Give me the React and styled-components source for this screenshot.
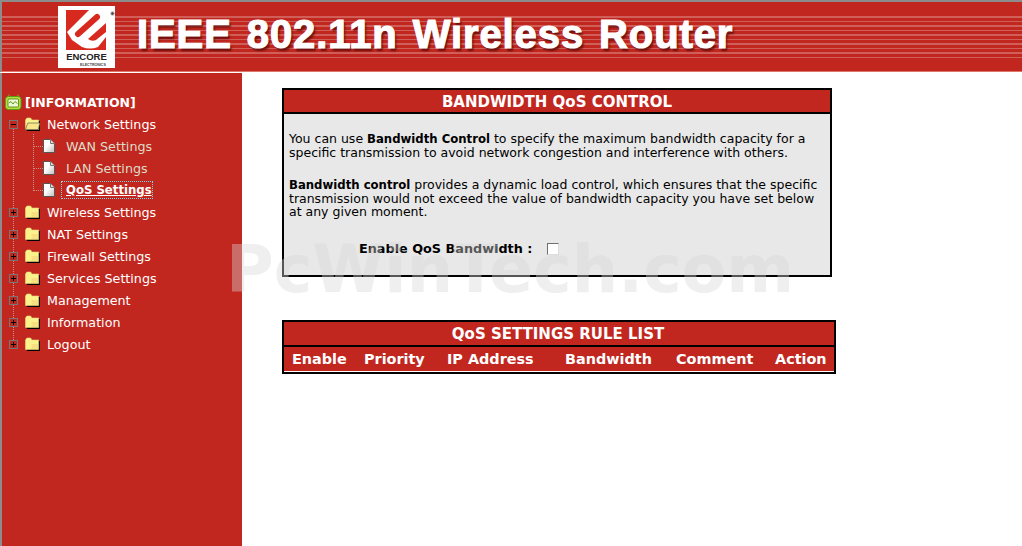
import React from 'react'
import styled, { createGlobalStyle } from 'styled-components'

const GlobalStyle = createGlobalStyle`
html, body { margin: 0; padding: 0; background: #fff; overflow: hidden; }
body { font-family: "DejaVu Sans", Verdana, sans-serif; }
`

const Page = styled.div`
position: relative;
width: 1022px;
height: 546px;
overflow: hidden;
background: #fff;
display: flex;
flex-direction: column;
border-top: 2px solid #8c8c8c;
box-sizing: border-box;
`

const Header = styled.header`
height: 70px;
flex: none;
display: flex;
align-items: flex-start;
padding-left: 58px;
border-left: 2px solid #8c8c8c;
border-bottom: 1px solid #e0756c;
box-sizing: border-box;
background:
  repeating-linear-gradient(180deg, rgba(255,255,255,.26) 0 1.5px, transparent 1.5px 4.55px) 0 14px / 100% 43px no-repeat,
  #c1271f;
`

const Logo = styled.div`
position: relative;
width: 57px;
height: 62px;
margin: 4px 0 0 -2px;
background: #fff;
flex: none;
`

const Registered = styled.span`
position: absolute;
left: 52px;
top: 5px;
width: 5px;
height: 5px;
box-sizing: border-box;
border-radius: 50%;
background: #555;
border: 1px solid #ddd;
`

const Title = styled.h1`
margin: 9px 0 0 22px;
font-family: "Liberation Sans", Arial, sans-serif;
font-weight: 700;
font-size: 40px;
line-height: 46px;
white-space: nowrap;
color: #fff;
-webkit-text-stroke: 1.2px #fff;
letter-spacing: .9px;
word-spacing: 3px;
text-shadow: 2px 3px 2px rgba(90,10,10,.8);
`

const Body = styled.div`
flex: 1;
display: flex;
margin-top: 1px;
min-height: 0;
`

const Sidebar = styled.nav`
width: 242px;
flex: none;
box-sizing: border-box;
border-left: 2px solid #8c8c8c;
background: #c1271f;
padding-top: 18px;
`

const TreeRoot = styled.div`
display: flex;
align-items: center;
height: 22px;
padding-left: 3px;
gap: 3px;
font-size: 12.5px;
font-weight: 700;
color: #fff;
`

const Row = styled.div`
position: relative;
display: flex;
align-items: center;
height: 22px;
padding-left: ${p => (p.$child ? 41 : 7)}px;
color: ${p => (p.$child ? '#dcdcc8' : '#fff')};
font-size: 12.7px;
white-space: nowrap;
`

const Expander = styled.span`
box-sizing: border-box;
width: 9px;
height: 9px;
border: 1px solid #777;
background: #c1271f;
margin-right: 7px;
flex: none;
position: relative;
&::before, &::after {
  content: '';
  position: absolute;
  background: #000;
}
&::before { left: 1px; right: 1px; top: 3px; height: 1px; }
&::after { display: ${p => (p.$open ? 'none' : 'block')}; top: 1px; bottom: 1px; left: 3px; width: 1px; }
`

const Label = styled.span`
margin-left: ${p => p.$gap}px;
padding: 0 1px;
${p => p.$active && `
  font-weight: 700;
  font-size: 11.7px;
  line-height: 15px;
  color: #fff;
  text-decoration: underline;
  outline: 1px dotted #7fd6e6;
  padding: 1px 0 0 4px;
`}
`

const Dots = styled.span`
position: absolute;
border-color: #c9908c;
border-style: dotted;
border-width: 0;
pointer-events: none;
`

const VLine = styled(Dots)`
left: 11px;
top: ${p => p.$top}px;
height: ${p => p.$height}px;
border-left-width: 1px;
`

const HookLine = styled(Dots)`
left: 31px;
bottom: 10px;
height: ${p => p.$height}px;
width: 9px;
border-left-width: 1px;
border-bottom-width: 1px;
`

const Main = styled.main`
flex: 1;
padding: 15px 0 0 40px;
display: flex;
flex-direction: column;
align-items: flex-start;
`

const Panel = styled.section`
box-sizing: border-box;
width: 550px;
height: 189px;
border: 2px solid #000;
background: #e8e8e8;
`

const PanelTitle = styled.div`
height: 22px;
line-height: 25px;
background: #c1271f;
border-bottom: 2px solid #000;
color: #fff;
font-size: 15px;
font-weight: 700;
text-align: center;
overflow: hidden;
`

const Para = styled.p`
margin: 0;
padding: ${p => p.$top}px 5px 0;
font-size: 12.5px;
line-height: 13px;
color: #000;
white-space: nowrap;
b { font-size: 11.7px; }
`

const EnableRow = styled.div`
display: flex;
align-items: center;
padding: 23px 0 0 75px;
font-size: 12.8px;
font-weight: 700;
color: #000;
`

const Check = styled.span`
box-sizing: border-box;
width: 12px;
height: 12px;
margin-left: 15px;
background: #fff;
border: 1px solid #707070;
border-right-color: #ddd;
border-bottom-color: #ddd;
`

const RuleTable = styled.section`
box-sizing: border-box;
width: 554px;
margin-top: 43px;
border: 2px solid #000;
`

const RuleTitle = styled.div`
height: 23px;
line-height: 24px;
background: #c1271f;
border-bottom: 2px solid #000;
color: #fff;
font-size: 15px;
font-weight: 700;
text-align: center;
padding-right: 2px;
`

const RuleHead = styled.div`
height: 24px;
display: flex;
align-items: center;
background: #c1271f;
color: #fff;
font-size: 14.4px;
font-weight: 700;
border-bottom: 1px solid #fff;
`

const Col = styled.span`
width: ${p => p.$w}px;
flex: none;
padding-left: ${p => p.$pad}px;
box-sizing: border-box;
white-space: nowrap;
`

const Watermark = styled.div`
position: absolute;
left: 226px;
top: 229px;
font-size: 65.2px;
line-height: 76px;
font-weight: 700;
color: rgba(215,215,215,.4);
white-space: nowrap;
pointer-events: none;
`

const FolderIcon = ({ open }) => (
  <svg width="15" height="14" viewBox="0 0 16 14" preserveAspectRatio="none" style={{ flex: 'none' }}>
    <path d="M2 3V14H16V4H9L7 2H3Z" fill="#000" />
    <path d="M.5 3 L2 1 H6 L7.5 3 H14.5 V12.5 H.5Z" fill="#fbf28c" stroke="#e9d87a" strokeWidth=".6" />
    <rect x="7" y="7" width="7" height="5" fill="#f6d97a" opacity=".7" />
    {open && <path d="M.5 12.5 L3 6 H16 L14 12.5Z" fill="#f8e58a" stroke="#444" strokeWidth=".6" />}
  </svg>
)

const PageIcon = () => (
  <svg width="12" height="14" viewBox="0 0 12 14" style={{ flex: 'none' }}>
    <defs>
      <linearGradient id="pg" x1="0" y1="0" x2="1" y2="1">
        <stop offset=".4" stopColor="#fff" />
        <stop offset="1" stopColor="#bdbdbd" />
      </linearGradient>
    </defs>
    <path d="M.5.5H7.5L11.5 4.5V13.5H.5Z" fill="url(#pg)" stroke="#555" />
    <path d="M7.5.5V4.5H11.5" fill="#ddd" stroke="#777" />
  </svg>
)

const TvIcon = () => (
  <svg width="17" height="16" viewBox="0 0 17 16" style={{ flex: 'none' }}>
    <path d="M5 3 3.5 .5M12 3 13.5 .5" stroke="#7cb31c" strokeWidth="1" />
    <rect x=".5" y="2.5" width="15.5" height="13" rx="3" fill="#b4e040" stroke="#5c9a10" />
    <rect x="3" y="5" width="10.5" height="8" rx="1" fill="#eefad0" stroke="#3f7d10" strokeWidth=".8" />
    <path d="M4 9 6 7.5 8 10 10 7.5 12.5 9.5" fill="none" stroke="#3f7d10" strokeWidth=".8" />
  </svg>
)

const EncoreLogo = () => (
  <svg width="57" height="62" viewBox="0 0 57 62">
    <rect x="8" y="4" width="40" height="40" fill="#d8291f" />
    <path d="M9 26 31 4H48V17L30 33Q34 36 38 34L48 26V31L40 41Q32 44 24 41L14 34Z" fill="#fff" />
    <path d="M20 28 39 11" stroke="#d8291f" strokeWidth="6" strokeLinecap="round" />
    <text x="28.5" y="54" textAnchor="middle" fontFamily="'Liberation Sans', Arial, sans-serif" fontWeight="700" fontSize="9.5" fill="#222">ENCORE</text>
    <text x="35" y="60" textAnchor="middle" fontFamily="'Liberation Sans', Arial, sans-serif" fontWeight="700" fontSize="3.6" fill="#444">ELECTRONICS</text>
  </svg>
)

const closedItems = ['Wireless Settings', 'NAT Settings', 'Firewall Settings', 'Services Settings', 'Management', 'Information', 'Logout']
const subItems = ['WAN Settings', 'LAN Settings', 'QoS Settings']
const columns = [
  ['Enable', 72, 8],
  ['Priority', 83, 8],
  ['IP Address', 118, 8],
  ['Bandwidth', 111, 8],
  ['Comment', 99, 8],
  ['Action', 65, 8],
]

export default function App() {
  return (
    <>
      <GlobalStyle />
      <Page>
        <Header>
          <Logo><EncoreLogo /><Registered /></Logo>
          <Title>IEEE 802.11n Wireless Router</Title>
        </Header>
        <Body>
          <Sidebar>
            <TreeRoot><TvIcon />[INFORMATION]</TreeRoot>
            <Row>
              <VLine $top={11} $height={220} />
              <Expander $open />
              <FolderIcon open />
              <Label $gap={6}>Network Settings</Label>
            </Row>
            {subItems.map((name, i) => (
              <Row $child key={name}>
                <HookLine $height={i === 0 ? 12 : 22} />
                <PageIcon />
                <Label $gap={i === 2 ? 7 : 10} $active={i === 2}>{name}</Label>
              </Row>
            ))}
            {closedItems.map(name => (
              <Row key={name}>
                <Expander />
                <FolderIcon />
                <Label $gap={6}>{name}</Label>
              </Row>
            ))}
          </Sidebar>
          <Main>
            <Panel>
              <PanelTitle>BANDWIDTH QoS CONTROL</PanelTitle>
              <Para $top={18}>You can use <b>Bandwidth Control</b> to specify the maximum bandwidth capacity for a<br />specific transmission to avoid network congestion and interference with others.</Para>
              <Para $top={19}><b>Bandwidth control</b> provides a dynamic load control, which ensures that the specific<br />transmission would not exceed the value of bandwidth capacity you have set below<br />at any given moment.</Para>
              <EnableRow>Enable QoS Bandwidth :<Check /></EnableRow>
            </Panel>
            <RuleTable>
              <RuleTitle>QoS SETTINGS RULE LIST</RuleTitle>
              <RuleHead>
                {columns.map(([name, w, pad]) => <Col key={name} $w={w} $pad={pad}>{name}</Col>)}
              </RuleHead>
            </RuleTable>
          </Main>
        </Body>
        <Watermark>PcWinTech.com</Watermark>
      </Page>
    </>
  )
}
